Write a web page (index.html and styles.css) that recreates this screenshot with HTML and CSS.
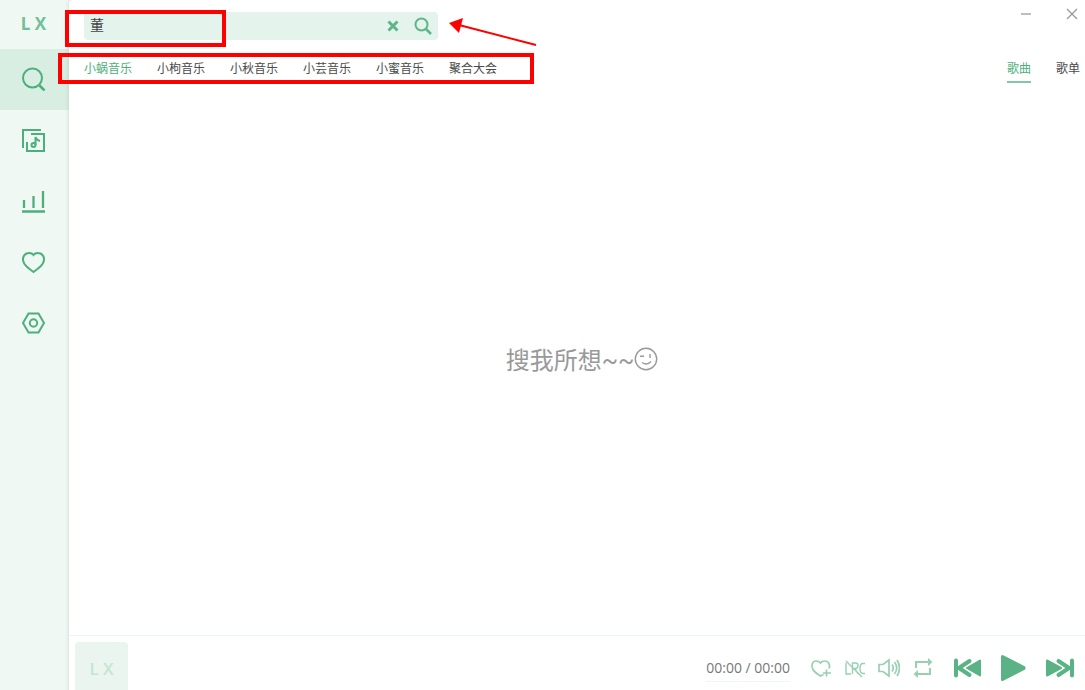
FILE: index.html
```html
<!DOCTYPE html>
<html lang="zh">
<head>
  <meta charset="UTF-8">
  <title>LX Music</title>
  <link rel="stylesheet" href="styles.css">
</head>
<body>
  <div class="app">
    <aside class="sidebar">
      <div class="logo">L X</div>
      <nav class="menu">
        <a class="menu-item active" href="#search" aria-label="搜索">
          <svg viewBox="0 0 24 24"><circle cx="10.500" cy="11" r="9.500"/><path d="M17.500 18.500l5 5" stroke-width="2.500"/></svg>
        </a>
        <a class="menu-item" href="#songlist" aria-label="歌单">
          <svg viewBox="0 0 24 24"><path d="M19 2H1v18M9 6h13v17H5v-9"/><circle cx="11.500" cy="17" r="2"/><path d="M13.500 17V9q1 3 4.500 4"/></svg>
        </a>
        <a class="menu-item" href="#leaderboard" aria-label="排行榜">
          <svg viewBox="0 0 24 24"><path d="M2 11v8M11.500 7v12M21 2v17M0 22.500h23" stroke-width="2.300"/></svg>
        </a>
        <a class="menu-item" href="#list" aria-label="我的列表">
          <svg viewBox="0 0 24 24"><path d="M11.500 22C8 19.500 4.500 17 2.500 14C0 10 .5 5.500 4.500 3.500C7.500 2.500 10 3 11.500 5C13 3 15.500 2.500 18.500 3.500C22.500 5.500 23 10 20.500 14C18.500 17 15 19.500 11.500 22z"/></svg>
        </a>
        <a class="menu-item" href="#setting" aria-label="设置">
          <svg viewBox="0 0 24 24"><path d="M6.500 2.500h10l5.500 9.500l-5.500 9.500h-10L1 12z"/><circle cx="11.500" cy="12" r="3.700"/></svg>
        </a>
      </nav>
    </aside>

    <div class="content">
      <header class="toolbar">
        <form class="search">
          <input type="text" value="董" aria-label="搜索歌曲">
          <button type="button" aria-label="清空">
            <svg viewBox="0 0 20 20"><path d="M5.500 5.500l9 9M14.500 5.500l-9 9" stroke-width="3"/></svg>
          </button>
          <button type="submit" aria-label="搜索">
            <svg viewBox="0 0 20 20"><circle cx="8.500" cy="8.500" r="6"/><path d="M13 13l5 5" stroke-width="2.500"/></svg>
          </button>
        </form>
        <div class="window-control">
          <button type="button" aria-label="最小化"><svg viewBox="0 0 12 12"><path d="M1 6h10"/></svg></button>
          <button type="button" aria-label="关闭"><svg viewBox="0 0 12 12"><path d="M1 1l10 10M11 1L1 11"/></svg></button>
        </div>
      </header>

      <div class="tabs">
        <nav class="sources">
          <a class="active" href="#kw">小蜗音乐</a>
          <a href="#kg">小枸音乐</a>
          <a href="#tx">小秋音乐</a>
          <a href="#wy">小芸音乐</a>
          <a href="#mg">小蜜音乐</a>
          <a href="#all">聚合大会</a>
        </nav>
        <nav class="types">
          <a class="active" href="#music">歌曲</a>
          <a href="#lists">歌单</a>
        </nav>
      </div>

      <main class="empty">
        <p>搜我所想~~</p>
        <svg viewBox="0 0 24 24"><circle cx="12" cy="12" r="10.700"/><path d="M6 9.500q2-1 4 0M16 7v4M8 15.500q5 3.500 9-1"/></svg>
      </main>

      <footer class="player">
        <div class="cover">L X</div>
        <div class="time">00:00 / 00:00</div>
        <div class="tools">
          <button type="button" aria-label="收藏">
            <svg viewBox="0 0 22 22"><path d="M13.500 17.500L10.500 19C7 17 4 14.500 2.700 12C.8 8 2.500 4 6 4C8 4 9.500 4.500 10.500 6C11.500 4.500 13.500 4 15 4C18.500 4 20.500 7.500 19 11.500M16.500 12.500v7M13 16h8"/></svg>
          </button>
          <button type="button" aria-label="桌面歌词">
            <svg class="thin" viewBox="0 0 22 22"><path d="M2 6v11h5M8.500 17V6h3q2.500 0 2.500 2.500T11.500 11.500h-3M11 11.500l3 5.500M21 6.500h-2q-3 0-3 5t3 5h2M2 4l16 16"/></svg>
          </button>
          <button type="button" aria-label="音量">
            <svg viewBox="0 0 22 22"><path d="M1 7.500h4l6-4.500v16l-6-4.500H1zM14 7.500q2.500 3.500 0 7M16.500 5q4.500 6 0 12M19 3q5 8 0 16"/></svg>
          </button>
          <button type="button" aria-label="列表循环">
            <svg viewBox="0 0 22 22"><path d="M4 11V5H17M18 11v6H5" stroke-width="2"/><path class="fill" d="M16 1l4.500 4L16 9zM6 13l-4.500 4L6 21z"/></svg>
          </button>
        </div>
        <div class="controls">
          <button type="button" aria-label="上一首">
            <svg viewBox="0 0 30 30"><path d="M3 7.500v15M16.500 8L6 15l10.500 7" fill="none" stroke-width="4" stroke-linecap="round"/><path d="M27 7.500v15L14 15z" stroke-width="2"/></svg>
          </button>
          <button type="button" aria-label="播放">
            <svg viewBox="0 0 30 30"><path d="M3.500 3.500L25 14.500v1L3.500 26.500z" stroke-width="3"/></svg>
          </button>
          <button type="button" aria-label="下一首">
            <svg viewBox="0 0 30 30"><path d="M27 7.500v15M13.500 8L24 15l-10.500 7" fill="none" stroke-width="4" stroke-linecap="round"/><path d="M2 7.500v15L16 15z" stroke-width="2"/></svg>
          </button>
        </div>
      </footer>
    </div>
  </div>

  <!-- 标注 -->
  <div class="mark mark-input"></div>
  <div class="mark mark-sources"></div>
  <svg class="arrow" viewBox="0 0 90 30"><path d="M10 8l77 20" stroke="#f00" stroke-width="2"/><path d="M0 6l14-5l-4 15z" fill="#f00"/></svg>
</body>
</html>
```
FILE: styles.css
```css
* {
  box-sizing: border-box;
}
body {
  margin: 0;
  overflow: hidden;
  font-family: "Noto Sans CJK SC", sans-serif;
  font-size: 12px;
  color: #4a4a4a;
}
a {
  color: inherit;
  text-decoration: none;
}
button {
  display: flex;
  align-items: center;
  justify-content: center;
  padding: 0;
  border: none;
  background: none;
  color: inherit;
  cursor: pointer;
}
svg {
  display: block;
  fill: none;
  stroke: currentColor;
  stroke-width: 2;
}
.app {
  display: flex;
  height: calc(100vh + 10px);
  background-color: #eff8f3;
}

/* 侧边栏 */
.sidebar {
  width: 69px;
  flex: none;
  color: #4daf7c;
}
.logo {
  height: 49px;
  padding-right: 2px;
  line-height: 48px;
  text-align: center;
  font-family: "Open Sans", sans-serif;
  font-size: 17px;
  font-weight: bold;
  color: #71bf96;
}
.menu-item {
  display: flex;
  align-items: center;
  justify-content: center;
  height: 61px;
  padding: 0 2px 2px 0;
}
.menu-item.active {
  background-color: #d9eee2;
}
.menu-item svg {
  width: 24px;
  height: 24px;
}

/* 主体 */
.content {
  flex: 1;
  min-width: 0;
  display: flex;
  flex-direction: column;
  background-color: #fff;
  border-top-left-radius: 4px;
  box-shadow: 0 0 4px rgba(0, 0, 0, 0.15);
}
.toolbar {
  display: flex;
  justify-content: space-between;
  height: 54px;
  padding-left: 15px;
}
.search {
  display: flex;
  width: 354px;
  height: 28px;
  margin-top: 12px;
  border-radius: 4px;
  background-color: #e4f3eb;
  color: #5db688;
}
.search input {
  flex: 1;
  min-width: 0;
  padding: 0 6px 4px;
  border: none;
  outline: none;
  background: none;
  font-family: inherit;
  font-size: 14px;
  color: #444;
}
.search button {
  width: 30px;
}
.search svg {
  width: 20px;
  height: 20px;
}
.window-control {
  display: flex;
  gap: 20px;
  height: 28px;
  color: #999;
}
.window-control button {
  width: 26px;
}
.window-control svg {
  width: 12px;
  height: 12px;
  stroke-width: 1.3;
}
.tabs {
  display: flex;
  justify-content: space-between;
  height: 30px;
  padding: 0 5px 0 15px;
  line-height: 28px;
}
.sources,
.types {
  display: flex;
  gap: 25px;
}
.tabs .active {
  color: #4daf7c;
}
.types a {
  height: 29px;
}
.types .active {
  border-bottom: 2px solid #82c7a3;
}
.empty {
  flex: 1;
  display: flex;
  align-items: center;
  justify-content: center;
  padding: 0 0 2px 10px;
  color: #999;
}
.empty p {
  margin: 0;
  font-family: Roboto, "Noto Sans CJK SC", sans-serif;
  font-size: 24px;
}
.empty svg {
  width: 24px;
  height: 24px;
  stroke-width: 1.4;
}

/* 播放栏 */
.player {
  display: flex;
  align-items: center;
  height: 65px;
  padding: 0 10px 0 6px;
  border-top: 1px solid #edf7f2;
  color: #5ab384;
}
.cover {
  width: 53px;
  height: 53px;
  margin-right: auto;
  border-radius: 4px;
  background-color: #eaf5ef;
  line-height: 53px;
  text-align: center;
  font-family: "Open Sans", sans-serif;
  font-size: 17px;
  font-weight: 600;
  color: #c3e5d2;
}
.time {
  margin-right: 20px;
  border-bottom: 1px solid #edf7f4;
  line-height: 26px;
  font-family: "Open Sans", sans-serif;
  font-size: 14px;
  color: #777;
}
.tools {
  display: flex;
  gap: 12px;
  margin-right: 19px;
  color: #98d0b2;
}
.tools svg {
  width: 22px;
  height: 22px;
  stroke-width: 1.7;
}
.tools .thin {
  stroke-width: 1.4;
}
.tools .fill {
  fill: currentColor;
  stroke: none;
}
.controls {
  display: flex;
  gap: 16px;
}
.controls svg {
  width: 30px;
  height: 30px;
  fill: currentColor;
  stroke-linejoin: round;
}

/* 标注框和箭头 */
.mark {
  position: absolute;
  border: 4px solid #f00;
}
.mark-input {
  top: 10px;
  left: 65px;
  width: 161px;
  height: 37px;
}
.mark-sources {
  top: 53px;
  left: 58px;
  width: 476px;
  height: 31px;
}
.arrow {
  position: absolute;
  top: 17px;
  left: 449px;
  width: 90px;
  height: 30px;
  stroke: none;
}
```
